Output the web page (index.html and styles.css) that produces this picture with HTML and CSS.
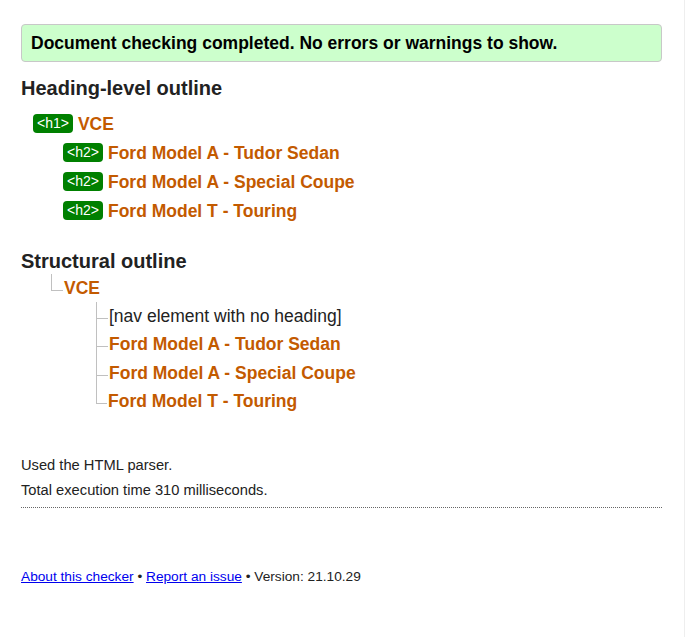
FILE: index.html
```html
<!DOCTYPE html>
<html>
<head>
<meta charset="utf-8">
<title>Nu Html Checker</title>
<link rel="stylesheet" href="styles.css">
</head>
<body>
<div class="page">
  <p class="success">Document checking completed. No errors or warnings to show.</p>

  <h2 class="section-title">Heading-level outline</h2>
  <ol class="hlist">
    <li class="hrow lvl1"><span class="tag">&lt;h1&gt;</span><span class="htext">VCE</span></li>
    <li class="hrow lvl2"><span class="tag">&lt;h2&gt;</span><span class="htext">Ford Model A - Tudor Sedan</span></li>
    <li class="hrow lvl2"><span class="tag">&lt;h2&gt;</span><span class="htext">Ford Model A - Special Coupe</span></li>
    <li class="hrow lvl2"><span class="tag">&lt;h2&gt;</span><span class="htext">Ford Model T - Touring</span></li>
  </ol>

  <h2 class="section-title struct-title">Structural outline</h2>
  <ol class="tree root">
    <li class="node top">
      <div class="nodeline"><span class="conn"></span><span class="htext">VCE</span></div>
      <ol class="tree sub">
        <li class="node"><div class="nodeline"><span class="conn"></span><span class="plain">[nav element with no heading]</span></div></li>
        <li class="node"><div class="nodeline"><span class="conn"></span><span class="htext">Ford Model A - Tudor Sedan</span></div></li>
        <li class="node"><div class="nodeline"><span class="conn"></span><span class="htext">Ford Model A - Special Coupe</span></div></li>
        <li class="node last"><div class="nodeline"><span class="conn"></span><span class="htext">Ford Model T - Touring</span></div></li>
      </ol>
    </li>
  </ol>

  <div class="stats">
    <p>Used the HTML parser.</p>
    <p>Total execution time 310 milliseconds.</p>
  </div>

  <p class="footer"><a href="#">About this checker</a> • <a href="#">Report an issue</a> • Version: 21.10.29</p>
</div>
</body>
</html>
```

FILE: styles.css
```css
html {
  margin: 0;
  padding: 0;
  background: #fff;
  min-height: 100%;
  box-sizing: border-box;
  border-right: 1px solid #eeeeee;
}
body {
  margin: 0;
  padding: 0;
  font-family: "Liberation Sans", Arial, sans-serif;
  color: #222;
}
.page {
  padding: 24px 22px 40px 21px;
}
.success {
  margin: 0;
  background: #ccffcc;
  border: 1px solid #c8c8c8;
  border-radius: 4px;
  padding: 6px 9px;
  font-size: 17.5px;
  line-height: 24px;
  font-weight: bold;
  color: #000;
}
.section-title {
  margin: 14px 0 0 0;
  font-size: 20px;
  line-height: 24px;
  font-weight: bold;
  color: #222;
}
.struct-title {
  margin-top: 24px;
}
.hlist {
  list-style: none;
  margin: 9px 0 0 0;
  padding: 0;
}
.hrow {
  display: flex;
  align-items: center;
  height: 29px;
}
.lvl1 { padding-left: 12px; }
.lvl2 { padding-left: 42px; }
.tag {
  display: inline-block;
  background: #008000;
  color: #fff;
  border-radius: 4px;
  font-size: 14px;
  line-height: 19px;
  padding: 0 4px;
  margin-right: 5px;
}
.htext {
  color: #c35a00;
  font-weight: bold;
  font-size: 17.5px;
  line-height: 22px;
}
.plain {
  color: #222;
  font-size: 17.5px;
  line-height: 22px;
}
.tree {
  list-style: none;
  margin: 0;
  padding: 0;
}
.root {
  margin-left: 30px;
  margin-top: 1px;
}
.sub {
  margin-left: 45px;
}
.node {
  border-left: 1px solid #c0c0c0;
}
.node.top,
.node.last {
  border-left: none;
}
.nodeline {
  display: flex;
  align-items: flex-start;
  height: 28.5px;
}
.top > .nodeline {
  height: 27.5px;
}
.conn {
  display: block;
  width: 11px;
  height: 16px;
  border-bottom: 1px solid #c0c0c0;
  margin-right: 1px;
  flex: none;
}
.last > .nodeline > .conn {
  border-left: 1px solid #c0c0c0;
  width: 10px;
}
.top > .nodeline > .conn {
  border-left: 1px solid #c0c0c0;
  width: 11px;
}
.nodeline .htext,
.nodeline .plain {
  margin-top: 3px;
}
.stats {
  margin-top: 37px;
  padding-bottom: 4px;
  border-bottom: 1px dotted #666;
}
.stats p {
  margin: 0;
  font-size: 14.7px;
  line-height: 25px;
  color: #222;
}
.footer {
  margin: 59px 0 0 0;
  font-size: 13.7px;
  line-height: 20px;
  color: #222;
}
.footer a {
  color: #0000ee;
}
```
